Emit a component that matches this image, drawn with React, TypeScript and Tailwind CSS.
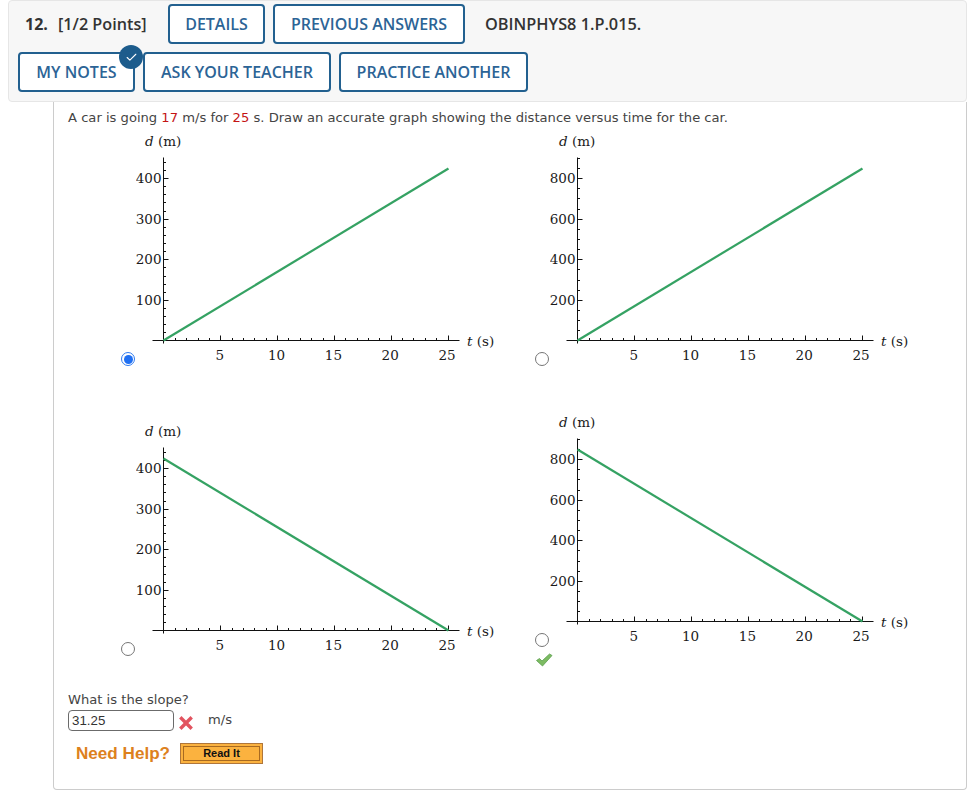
import { Check } from "lucide-react";

interface GraphProps {
  yLabels: number[];
  minorPerMajor: number;
  falling?: boolean;
}

const ox = 27.5;
const oy = 210.5;
const xStep = 11.36;
const yStep = 40.6;

const Graph: React.FC<GraphProps> = ({ yLabels, minorPerMajor, falling }) => {
  let xTicks = Array.from({ length: 26 }, (_, i) => i).filter((i) => i > 0);
  let yMinorStep = yStep / minorPerMajor;
  let yTicks = Array.from(
    { length: Math.floor(183 / yMinorStep) },
    (_, i) => i + 1
  );
  return (
    <svg width="364" height="236" className="block shrink-0">
      <g stroke="#111" strokeWidth="1">
        <line x1={ox} y1={oy - 183} x2={ox} y2={oy + 3} />
        <line x1={ox - 11} y1={oy} x2={ox + 296} y2={oy} />
        {xTicks.map((i) => (
          <line
            key={i}
            x1={Math.round(ox + i * xStep) + 0.5}
            x2={Math.round(ox + i * xStep) + 0.5}
            y1={oy}
            y2={oy - (i % 5 === 0 ? 5 : 2.5)}
          />
        ))}
        {yTicks.map((i) => (
          <line
            key={i}
            y1={Math.round(oy - i * yMinorStep) + 0.5}
            y2={Math.round(oy - i * yMinorStep) + 0.5}
            x1={ox}
            x2={ox + (i % minorPerMajor === 0 ? 5 : 2.5)}
          />
        ))}
      </g>
      <line
        x1={ox}
        y1={falling ? oy - 172 : oy}
        x2={ox + 285}
        y2={falling ? oy : oy - 172}
        stroke="#35a263"
        strokeWidth="2.2"
      />
      <g className="font-['DejaVu_Serif',serif] text-[13.5px]" fill="#1a1a1a">
        <text x="9" y="16">
          <tspan fontStyle="italic">d</tspan> (m)
        </text>
        {yLabels.map((label, i) => (
          <text
            key={label}
            x={ox - 2}
            y={oy - (i + 1) * yStep + 5}
            textAnchor="end"
          >
            {label}
          </text>
        ))}
        {[5, 10, 15, 20, 25].map((label) => (
          <text
            key={label}
            x={ox + label * xStep - 0.5}
            y={oy + 19.5}
            textAnchor="middle"
          >
            {label}
          </text>
        ))}
        <text x="331" y={oy + 5}>
          <tspan fontStyle="italic">t</tspan> (s)
        </text>
      </g>
    </svg>
  );
};

const Radio = ({ selected }: { selected?: boolean }) =>
  selected ? (
    <div className="mr-[1px] ml-px flex h-[14px] w-[14px] shrink-0 items-center justify-center rounded-full border border-[#2f7bf0] bg-white">
      <div className="h-[9px] w-[9px] rounded-full bg-[#1f6ff2]" />
    </div>
  ) : (
    <div className="mr-[1px] ml-px h-[14px] w-[14px] shrink-0 rounded-full border-[1.5px] border-[#767676] bg-white" />
  );

const HeaderButton = ({ children }: { children: string }) => (
  <button
    type="button"
    className="flex h-10 w-full items-center justify-center rounded border-2 border-[#22608f] bg-white text-[16px] font-semibold text-[#2c6496]"
  >
    {children}
  </button>
);

export default function App() {
  return (
    <div className="relative h-[811px] w-[975px] overflow-hidden bg-white font-['DejaVu_Sans',sans-serif]">
      <div className="ml-2 h-[102px] w-[959px] rounded-sm border border-[#e6e6e6] bg-[#f7f7f7] font-['Open_Sans',sans-serif]">
        <div className="mt-[3px] flex h-10 items-center pl-4">
          <span className="w-[33px] text-[16px] font-bold text-[#333]">12.</span>
          <span className="w-[110px] text-[16.2px] font-semibold text-[#333]">
            [1/2 Points]
          </span>
          <div className="flex gap-2">
            <div className="w-[97px]">
              <HeaderButton>DETAILS</HeaderButton>
            </div>
            <div className="w-[192px]">
              <HeaderButton>PREVIOUS ANSWERS</HeaderButton>
            </div>
          </div>
          <span className="ml-[20px] text-[16.3px] font-semibold text-[#333]">
            OBINPHYS8 1.P.015.
          </span>
        </div>
        <div className="mt-2 flex pl-[9px]">
          <div className="relative w-[117px]">
            <HeaderButton>MY NOTES</HeaderButton>
            <div className="absolute -top-[7px] -right-[8px] flex h-6 w-6 items-center justify-center rounded-full bg-[#1d5c8c]">
              <Check size={13} color="white" strokeWidth={2} />
            </div>
          </div>
          <div className="ml-2 w-[188px]">
            <HeaderButton>ASK YOUR TEACHER</HeaderButton>
          </div>
          <div className="ml-2 w-[189px]">
            <HeaderButton>PRACTICE ANOTHER</HeaderButton>
          </div>
        </div>
      </div>

      <div className="ml-[53px] h-[688px] w-[914px] rounded-b-sm border border-t-0 border-[#cccccc]">
        <p className="pt-[6px] pl-[14px] text-[13.12px] leading-5 text-[#444]">
          A car is going <span className="text-[#c41414]">17</span> m/s for{" "}
          <span className="text-[#c41414]">25</span> s. Draw an accurate graph
          showing the distance versus time for the car.
        </p>
        <div className="mt-[2px] ml-[66px] grid grid-cols-[414px_1fr]">
          <div className="flex items-end">
            <Radio selected />
            <Graph yLabels={[100, 200, 300, 400]} minorPerMajor={5} />
          </div>
          <div className="flex items-end">
            <Radio />
            <Graph yLabels={[200, 400, 600, 800]} minorPerMajor={4} />
          </div>
          <div className="mt-[45px] flex items-end self-start pt-[9px]">
            <Radio />
            <Graph yLabels={[100, 200, 300, 400]} minorPerMajor={5} falling />
          </div>
          <div className="mt-[45px]">
            <div className="flex items-end">
              <Radio />
              <Graph yLabels={[200, 400, 600, 800]} minorPerMajor={4} falling />
            </div>
            <svg width="18" height="14" viewBox="0 0 18 14" className="mt-[6px] ml-[1px] block">
              <path
                d="M1.5 7.5 L4.5 5.5 L7 8 L14.5 1 L17 2.5 L7.5 13 Z"
                fill="#7dbb62"
                stroke="#5a9e4e"
                strokeWidth="0.8"
                strokeLinejoin="round"
              />
            </svg>
          </div>
        </div>

        <div className="mt-[23px] pl-[14px]">
          <p className="text-[13.12px] leading-5 text-[#444]">What is the slope?</p>
          <div className="flex items-center">
            <div className="flex h-[21px] w-[106px] items-center rounded-sm border border-[#6b6b6b] pl-[3px] font-['Liberation_Sans',sans-serif] text-[13.3px] text-[#333]">
              31.25
            </div>
            <svg width="14" height="14" viewBox="0 0 14 14" className="mt-1 ml-[5px]">
              <path
                d="M2.5 2.5 L11.5 11.5 M11.5 2.5 L2.5 11.5"
                stroke="#e2535f"
                strokeWidth="3.4"
                strokeLinecap="square"
              />
            </svg>
            <span className="mb-[2px] ml-[15px] text-[13.12px] text-[#444]">m/s</span>
          </div>
          <div className="mt-[11px] flex h-[22px] items-center pl-2 font-['Liberation_Sans',sans-serif]">
            <span className="w-[104px] text-[17.1px] font-bold text-[#dd811d]">Need Help?</span>
            <button
              type="button"
              className="h-[21px] w-[83px] border border-[#b0763a] bg-[#fbb23f] p-[2px] text-[11px] leading-none font-bold text-[#111]"
            >
              <span className="flex h-full items-center justify-center border border-[#a86a20]">
                Read It
              </span>
            </button>
          </div>
        </div>
      </div>
    </div>
  );
}
